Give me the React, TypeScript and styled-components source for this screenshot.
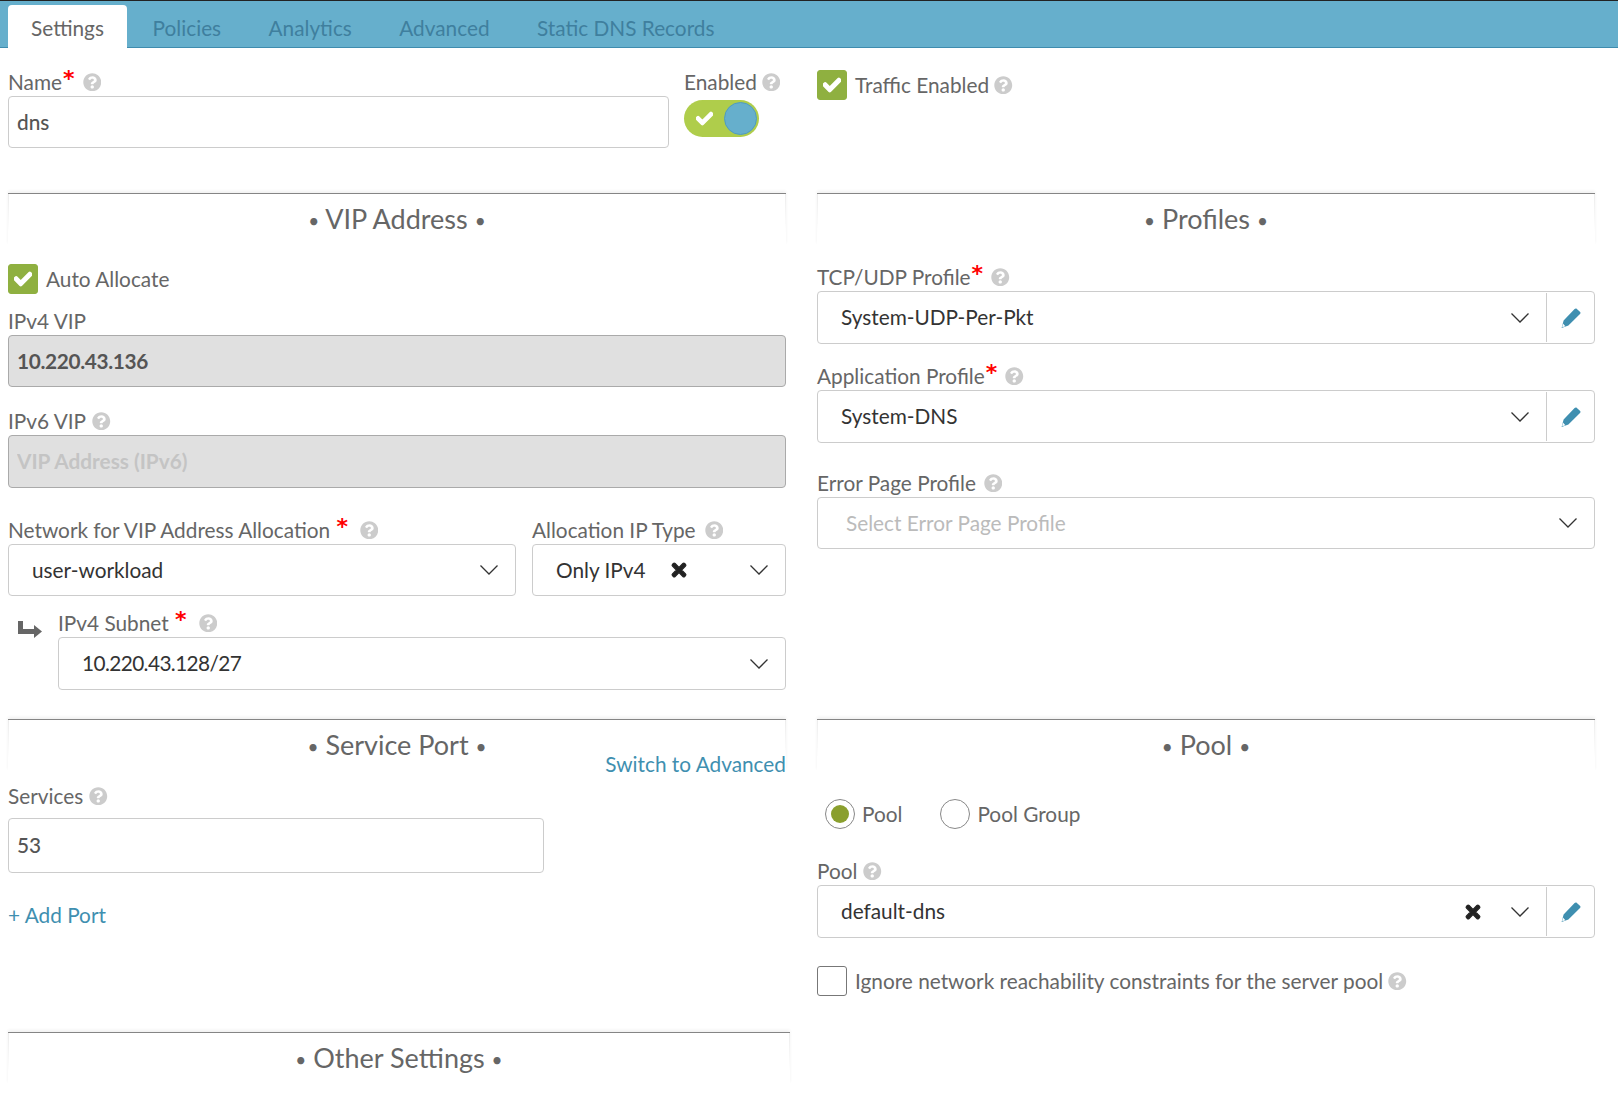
import React from 'react';
import styled, { createGlobalStyle } from 'styled-components';
import { FaCheck, FaQuestionCircle, FaTimes } from 'react-icons/fa';

const GlobalStyle = createGlobalStyle`
  html, body {
    margin: 0;
    padding: 0;
    background: #fff;
    font-family: Lato, "Open Sans", sans-serif;
    color: #666;
  }
`;

const Page = styled.div`
  width: 1618px;
  height: 1095px;
  overflow: hidden;
  border-top: 1px solid #222;
  box-sizing: border-box;
`;

const TabBar = styled.div`
  height: 47px;
  box-sizing: border-box;
  background: #66afcc;
  border-bottom: 1px solid #3f8cae;
  display: flex;
  align-items: flex-end;
  padding-left: 8px;
`;

const Tab = styled.div<{ $active?: boolean }>`
  height: 43px;
  margin-bottom: -1px;
  margin-right: ${(p) => (p.$active ? '2px' : '0')};
  padding: 0 ${(p) => (p.$active ? '23px' : '23.7px')} 0 ${(p) => (p.$active ? '23px' : '23.7px')};
  box-sizing: border-box;
  line-height: 46px;
  font-size: 20.8px;
  color: ${(p) => (p.$active ? '#666' : '#3f7f9e')};
  background: ${(p) => (p.$active ? '#fff' : 'transparent')};
  border-radius: 4px 4px 0 0;
`;

const Columns = styled.div`
  display: grid;
  grid-template-columns: 778px 778px;
  column-gap: 31px;
  align-items: start;
  padding-left: 8px;
`;

const Column = styled.div`
  display: flex;
  flex-direction: column;
`;

const Row = styled.div<{ $mt?: number; $gap?: number }>`
  display: flex;
  align-items: flex-start;
  margin-top: ${(p) => p.$mt ?? 0}px;
  gap: ${(p) => p.$gap ?? 0}px;
`;

const Field = styled.div<{ $mt?: number; $width?: number }>`
  margin-top: ${(p) => p.$mt ?? 0}px;
  width: ${(p) => (p.$width ? `${p.$width}px` : 'auto')};
  flex: ${(p) => (p.$width ? '0 0 auto' : '1 1 auto')};
  min-width: 0;
`;

const Label = styled.div<{ $gap?: number; $mb?: number }>`
  height: 26px;
  box-sizing: border-box;
  padding-bottom: 2px;
  margin-bottom: ${(p) => p.$mb ?? 0}px;
  line-height: 24px;
  font-size: 20.8px;
  color: #666;
  white-space: nowrap;
  display: flex;
  align-items: center;

  svg {
    margin-left: ${(p) => p.$gap ?? 8}px;
  }
`;

const Required = styled.span`
  color: #f00;
  font-family: "DejaVu Sans", sans-serif;
  font-size: 22px;
  font-weight: 700;
  line-height: 20px;
  height: 20px;
  margin-left: 1px;
  margin-top: -6px;
`;

const HelpIcon = styled(FaQuestionCircle)`
  color: #ccc;
  font-size: 18.5px;
  flex: none;
`;

const TextInput = styled.input<{ $height?: number; $width?: number }>`
  display: block;
  width: ${(p) => (p.$width ? `${p.$width}px` : '100%')};
  height: ${(p) => p.$height ?? 52}px;
  box-sizing: border-box;
  border: 1px solid #ccc;
  border-radius: 4px;
  padding: 0 8px 2px;
  font-family: inherit;
  font-size: 20.8px;
  font-weight: 500;
  color: #555;
  outline: none;
  background: #fff;

  &:disabled {
    background: #e0e0e0;
    border-color: #aaa;
    color: #555;
    -webkit-text-fill-color: #555;
    opacity: 1;
    font-weight: 700;
    letter-spacing: -0.35px;
  }

  &::placeholder {
    color: #c4c4c4;
    -webkit-text-fill-color: #c4c4c4;
    font-weight: 700;
    letter-spacing: 0;
    opacity: 1;
  }
`;

const SelectBox = styled.div<{ $height?: number }>`
  height: ${(p) => p.$height ?? 52}px;
  box-sizing: border-box;
  border: 1px solid #ccc;
  border-radius: 4px;
  display: flex;
  align-items: center;
  background: #fff;
`;

const SelectValue = styled.div<{ $placeholder?: boolean; $tight?: boolean }>`
  flex: 1 1 auto;
  padding-left: ${(p) => (p.$placeholder ? '28px' : '23px')};
  padding-bottom: 2px;
  font-size: 20.8px;
  letter-spacing: ${(p) => (p.$tight ? '-0.6px' : '0')};
  color: ${(p) => (p.$placeholder ? '#bbb' : '#333')};
  white-space: nowrap;
`;

const Clear = styled(FaTimes)<{ $mr: number }>`
  color: #222;
  font-size: 20px;
  stroke: currentColor;
  stroke-width: 30;
  margin-right: ${(p) => p.$mr}px;
  flex: none;
`;

const Chevron = styled.svg`
  width: 20px;
  height: 12px;
  margin-right: 16px;
  flex: none;
`;

const EditButton = styled.div`
  width: 47px;
  align-self: stretch;
  margin: 1px 0;
  border-left: 1px solid #ccc;
  display: flex;
  align-items: center;
  justify-content: center;
  flex: none;
`;

const Pencil = styled.svg`
  width: 20px;
  height: 20px;
`;

const SectionHead = styled.div<{ $mt?: number; $wide?: boolean }>`
  margin-top: ${(p) => p.$mt ?? 0}px;
  width: ${(p) => (p.$wide ? '782px' : '100%')};
  height: 52px;
  box-sizing: border-box;
  border-top: 1px solid #858585;
  box-shadow: 0 -2px 3px rgba(0, 0, 0, 0.06);
  text-align: center;
  font-size: 27px;
  line-height: 50px;
  color: #666;
  background:
    linear-gradient(#ececec, #fff) left top / 1px 75% no-repeat,
    linear-gradient(#ececec, #fff) right top / 1px 75% no-repeat;
`;

const Bullet = styled.span`
  font-size: 19px;
  vertical-align: 1px;
`;

const CheckRow = styled.div<{ $mt?: number }>`
  display: flex;
  align-items: center;
  margin-top: ${(p) => p.$mt ?? 0}px;
  font-size: 20.8px;
  color: #666;
  white-space: nowrap;

  svg.help {
    margin-left: 5px;
  }
`;

const OptionText = styled.span`
  padding-bottom: 2px;
`;

const CheckBox = styled.div<{ $checked?: boolean }>`
  width: 30px;
  height: 30px;
  box-sizing: border-box;
  border-radius: 3px;
  margin-right: 8px;
  flex: none;
  display: flex;
  align-items: center;
  justify-content: center;
  color: #fff;
  font-size: 18px;
  background: ${(p) => (p.$checked ? '#8fb040' : '#fff')};
  border: 1px solid ${(p) => (p.$checked ? '#8fb040' : '#777')};

  svg {
    stroke: currentColor;
    stroke-width: 40;
  }
`;

const Toggle = styled.div`
  position: relative;
  width: 75px;
  height: 37px;
  margin-top: 4px;
  border-radius: 19px;
  background: #afcd4b;
  color: #fff;
  font-size: 17px;
  display: flex;
  align-items: center;
  padding-left: 12px;
  box-sizing: border-box;

  svg {
    stroke: currentColor;
    stroke-width: 40;
  }
`;

const ToggleThumb = styled.div`
  position: absolute;
  right: 2px;
  top: 2px;
  width: 33px;
  height: 33px;
  border-radius: 50%;
  background: #66afcc;
  border: 1px solid #4f9cc0;
  box-sizing: border-box;
`;

const RadioGroup = styled.div`
  display: flex;
  align-items: center;
  margin-top: 28px;
  padding-left: 8px;
`;

const RadioItem = styled.div`
  display: flex;
  align-items: center;
  font-size: 20.8px;
  color: #666;
  margin-right: 38px;
`;

const RadioCircle = styled.div<{ $on?: boolean }>`
  width: 30px;
  height: 30px;
  border-radius: 50%;
  border: 1px solid #888;
  box-sizing: border-box;
  margin-right: 7px;
  display: flex;
  align-items: center;
  justify-content: center;

  &::after {
    content: '';
    width: 18px;
    height: 18px;
    border-radius: 50%;
    background: ${(p) => (p.$on ? '#8a9f2e' : 'transparent')};
  }
`;

const LinkText = styled.div<{ $mt?: number }>`
  color: #3f8fb0;
  font-size: 20.8px;
  white-space: nowrap;
  margin-top: ${(p) => p.$mt ?? 0}px;
`;

const SwitchLink = styled(LinkText)`
  position: absolute;
  right: 0;
  top: 61px;
  margin-top: 0;
`;

const SectionWrap = styled.div`
  position: relative;
`;

const SubnetArrow = styled.svg`
  width: 26px;
  height: 18px;
  margin: 9px 0 0 9px;
  flex: none;
`;

const ChevronDown = () => (
  <Chevron viewBox="0 0 20 12">
    <polyline points="1.5,1.5 10,10 18.5,1.5" fill="none" stroke="#333" strokeWidth="1.3" />
  </Chevron>
);

const Edit = () => (
  <EditButton>
    <Pencil viewBox="0 0 20 20">
      <path
        d="M2.6 12.6 13.6 1.1c.7-.7 1.6-.7 2.3-.1l3 2.7c.8.7.8 1.6.1 2.3L7.4 17.6 .6 20z"
        fill="#3f8fb0"
      />
      <path d="M1.9 15.6 4.4 18.3 1.2 19.3z" fill="#fff" />
    </Pencil>
  </EditButton>
);

const Help = () => <HelpIcon className="help" />;

const Heading = ({ title, mt, wide }: { title: string; mt?: number; wide?: boolean }) => (
  <SectionHead $mt={mt} $wide={wide}>
    <Bullet>•</Bullet> {title} <Bullet>•</Bullet>
  </SectionHead>
);

export default function App() {
  return (
    <Page>
      <GlobalStyle />
      <TabBar>
        <Tab $active>Settings</Tab>
        <Tab>Policies</Tab>
        <Tab>Analytics</Tab>
        <Tab>Advanced</Tab>
        <Tab>Static DNS Records</Tab>
      </TabBar>
      <Columns>
        <Column>
          <Row $mt={22} $gap={15}>
            <Field $width={661}>
              <Label>
                Name<Required>*</Required>
                <Help />
              </Label>
              <TextInput readOnly value="dns" />
            </Field>
            <Field $width={100}>
              <Label $gap={5}>
                Enabled
                <Help />
              </Label>
              <Toggle>
                <FaCheck />
                <ToggleThumb />
              </Toggle>
            </Field>
          </Row>

          <Heading title="VIP Address" mt={45} />
          <CheckRow $mt={19}>
            <CheckBox $checked>
              <FaCheck />
            </CheckBox>
            <OptionText>Auto Allocate</OptionText>
          </CheckRow>
          <Field $mt={15}>
            <Label>IPv4 VIP</Label>
            <TextInput disabled value="10.220.43.136" />
          </Field>
          <Field $mt={22}>
            <Label $gap={6}>
              IPv6 VIP
              <Help />
            </Label>
            <TextInput disabled placeholder="VIP Address (IPv6)" $height={53} />
          </Field>
          <Row $mt={30} $gap={16}>
            <Field $width={508}>
              <Label $gap={12}>
                Network for VIP Address Allocation&nbsp;<Required>*</Required>
                <Help />
              </Label>
              <SelectBox>
                <SelectValue>user-workload</SelectValue>
                <ChevronDown />
              </SelectBox>
            </Field>
            <Field $width={254}>
              <Label $gap={9}>
                Allocation IP Type
                <Help />
              </Label>
              <SelectBox>
                <SelectValue>Only IPv4</SelectValue>
                <Clear $mr={60} />
                <ChevronDown />
              </SelectBox>
            </Field>
          </Row>
          <Row $mt={15} $gap={15}>
            <SubnetArrow viewBox="0 0 26 18">
              <path d="M1 1h5v8h11V5l8 6.5-8 6.5v-4H1z" fill="#666" />
            </SubnetArrow>
            <Field>
              <Label $gap={12}>
                IPv4 Subnet&nbsp;<Required>*</Required>
                <Help />
              </Label>
              <SelectBox $height={53}>
                <SelectValue $tight>10.220.43.128/27</SelectValue>
                <ChevronDown />
              </SelectBox>
            </Field>
          </Row>

          <SectionWrap>
            <Heading title="Service Port" mt={29} />
            <SwitchLink>Switch to Advanced</SwitchLink>
          </SectionWrap>
          <Field $mt={13}>
            <Label $mb={8} $gap={6}>
              Services
              <Help />
            </Label>
            <TextInput readOnly value="53" $width={536} $height={55} />
          </Field>
          <LinkText $mt={29}>+ Add Port</LinkText>
          <Heading title="Other Settings" mt={105} wide />
        </Column>

        <Column>
          <CheckRow $mt={22}>
            <CheckBox $checked>
              <FaCheck />
            </CheckBox>
            <OptionText>Traffic Enabled</OptionText>
            <Help />
          </CheckRow>
          <Heading title="Profiles" mt={93} />
          <Field $mt={20}>
            <Label>
              TCP/UDP Profile<Required>*</Required>
              <Help />
            </Label>
            <SelectBox $height={53}>
              <SelectValue>System-UDP-Per-Pkt</SelectValue>
              <ChevronDown />
              <Edit />
            </SelectBox>
          </Field>
          <Field $mt={20}>
            <Label>
              Application Profile<Required>*</Required>
              <Help />
            </Label>
            <SelectBox $height={53}>
              <SelectValue>System-DNS</SelectValue>
              <ChevronDown />
              <Edit />
            </SelectBox>
          </Field>
          <Field $mt={28}>
            <Label>
              Error Page Profile
              <Help />
            </Label>
            <SelectBox>
              <SelectValue $placeholder>Select Error Page Profile</SelectValue>
              <ChevronDown />
            </SelectBox>
          </Field>
          <Heading title="Pool" mt={170} />
          <RadioGroup>
            <RadioItem>
              <RadioCircle $on />
              <OptionText>Pool</OptionText>
            </RadioItem>
            <RadioItem>
              <RadioCircle />
              <OptionText>Pool Group</OptionText>
            </RadioItem>
          </RadioGroup>
          <Field $mt={30}>
            <Label $gap={6}>
              Pool
              <Help />
            </Label>
            <SelectBox $height={53}>
              <SelectValue>default-dns</SelectValue>
              <Clear $mr={27} />
              <ChevronDown />
              <Edit />
            </SelectBox>
          </Field>
          <CheckRow $mt={28}>
            <CheckBox />
            <OptionText>Ignore network reachability constraints for the server pool</OptionText>
            <Help />
          </CheckRow>
        </Column>
      </Columns>
    </Page>
  );
}
